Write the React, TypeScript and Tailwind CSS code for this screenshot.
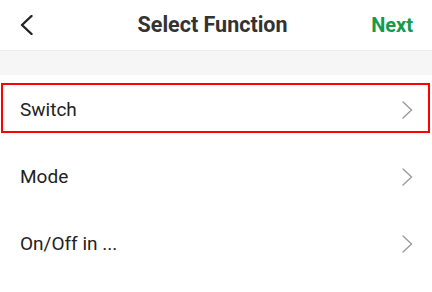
const rows = ['Switch', 'Mode', 'On/Off in ...']

function Chevron({ dir, className }: Readonly<{ dir: 'left' | 'right'; className: string }>) {
  return (
    <svg viewBox="0 0 12 20" fill="none" stroke="currentColor" strokeLinecap="round" strokeLinejoin="round" className={className} aria-hidden="true">
      {dir === 'left' ? <polyline points="11,1 1.5,10 11,19" /> : <polyline points="1,1 10.5,10 1,19" />}
    </svg>
  )
}

export default function App() {
  return (
    <div className="h-[292px] w-[432px] overflow-hidden bg-white font-['Roboto',sans-serif] text-[#222]">
      <header className="flex h-[51px] items-center justify-between border-b border-[#ececec] pl-[20px] pr-[19px]">
        <Chevron dir="left" className="h-[20px] w-[13px] stroke-[2.4] text-[#222]" />
        <h1 className="ml-[21px] text-[21.5px] font-bold text-[#333]">Select Function</h1>
        <span className="text-[20px] font-bold text-[#169a4b]">Next</span>
      </header>
      <div className="h-[24px] bg-[#f6f6f6]" />
      <ul>
        {rows.map((label, i) => (
          <li key={label} className="relative flex h-[67px] items-center justify-between pt-[3px] pl-5 pr-[19px]">
            <span className="text-[19px] text-[#222]">{label}</span>
            <Chevron dir="right" className="h-[18px] w-[11px] stroke-[1.5] text-[#9a9a9a]" />
            {i === 0 && (
              <div className="pointer-events-none absolute top-[8px] right-[2px] bottom-[9px] left-[1px] border-2 border-[#ff0000]" />
            )}
          </li>
        ))}
      </ul>
    </div>
  )
}
